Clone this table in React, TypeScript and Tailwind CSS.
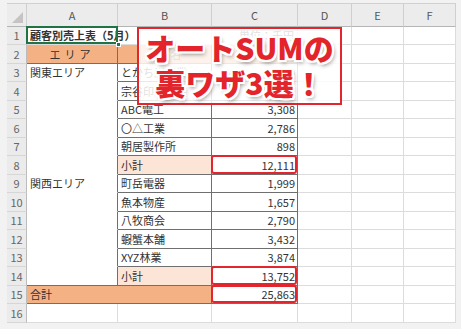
import type { ReactNode } from "react";

const FONT = "font-['Noto_Sans_CJK_JP',sans-serif]";

// light grid line / dark table line
const GRID = "border-r border-b border-[#dcdcdc]";

function Cell({ className = "", children }: { className?: string; children?: ReactNode }) {
  return (
    <div className={`relative flex items-center px-[3px] whitespace-nowrap text-[11px] text-[#333] ${className}`}>
      {children}
    </div>
  );
}

function RowHead({ n }: { n: number }) {
  return (
    <div className="flex items-center justify-center border-r border-b border-r-[#bcbcbc] border-b-[#d6d6d6] bg-[#ebebeb] text-[11px] text-[#666]">
      {n}
    </div>
  );
}

function RedBox() {
  return <div className="absolute -left-px -top-px right-0 bottom-0 rounded-[3px] border-2 border-[#e3262d]" />;
}

function Empty3() {
  return (
    <>
      <Cell className={GRID} />
      <Cell className={GRID} />
      <Cell className={GRID} />
    </>
  );
}

// table rows 3..14: [row, area, customer, sales, subtotal?]
const BODY: [number, string, string, string, boolean][] = [
  [3, "関東エリア", "とかち川産業", "2,059", false],
  [4, "", "宗谷印刷", "3,060", false],
  [5, "", "ABC電工", "3,308", false],
  [6, "", "〇△工業", "2,786", false],
  [7, "", "朝居製作所", "898", false],
  [8, "", "小計", "12,111", true],
  [9, "関西エリア", "町岳電器", "1,999", false],
  [10, "", "魚本物産", "1,657", false],
  [11, "", "八牧商会", "2,790", false],
  [12, "", "蝦蟹本舗", "3,432", false],
  [13, "", "XYZ林業", "3,874", false],
  [14, "", "小計", "13,752", true],
];

export default function App() {
  return (
    <div className={`relative h-[329px] w-[461px] overflow-hidden bg-[#f2f2f2] pl-[7px] pt-[3px] ${FONT}`}>
      <div className="grid w-[449px] grid-cols-[20px_91px_94px_86px_54px_52px_52px] grid-rows-[23px_18px_19px_18px_19px_18px_19px_18px_19px_18px_19px_18px_19px_18px_19px_18px_19px] border-t border-[#d0d0d0] bg-white">
        {/* column headers */}
        <div className="relative border-r border-b border-r-[#cfcfcf] border-b-[#b5b5b5] bg-[#ececec]">
          <svg className="absolute bottom-[3px] right-[3px]" width="11" height="11" viewBox="0 0 11 11">
            <polygon points="11,0 11,11 0,11" fill="#c4c4c4" />
          </svg>
        </div>
        {["A", "B", "C", "D", "E", "F"].map((l) => (
          <div
            key={l}
            className="flex items-center justify-center border-r border-b border-r-[#cfcfcf] border-b-[#b5b5b5] bg-[#ececec] text-[11px] text-[#555]"
          >
            {l}
          </div>
        ))}

        {/* row 1 */}
        <RowHead n={1} />
        <Cell className="z-10 border-b border-[#dcdcdc] font-bold text-[#222]">
          顧客別売上表（5月）
          <div className="absolute -left-px -top-px right-0 bottom-0 border-2 border-[#217346]" />
          <div className="absolute -bottom-[3px] right-[-3px] h-[5px] w-[5px] border border-white bg-[#217346]" />
        </Cell>
        <Cell className={GRID} />
        <Cell className={`${GRID} justify-end text-[10px]`}>単位：千円</Cell>
        <Empty3 />

        {/* row 2 */}
        <RowHead n={2} />
        <Cell className="justify-center border-r border-b border-[#6f6f6f] bg-[#f4b183] tracking-[4px]">エリア</Cell>
        <Cell className="justify-center border-r border-b border-[#6f6f6f] bg-[#f4b183]">顧客名</Cell>
        <Cell className="justify-center border-r border-b border-[#6f6f6f] bg-[#f4b183]">売上</Cell>
        <Empty3 />

        {BODY.map(([row, area, name, sales, sub]) => (
          <div key={row} className="contents">
            <RowHead n={row} />
            <Cell className={`border-r border-b border-r-[#6f6f6f] ${row === 14 ? "border-b-[#6f6f6f]" : "border-b-white"}`}>
              {area}
            </Cell>
            <Cell className={`border-r border-b border-[#6f6f6f] ${sub ? "bg-[#fce4d6]" : ""}`}>{name}</Cell>
            <Cell className="justify-end border-r border-b border-[#6f6f6f] pr-[2px]">
              {sales}
              {sub && <RedBox />}
            </Cell>
            <Empty3 />
          </div>
        ))}

        {/* row 15 */}
        <RowHead n={15} />
        <Cell className="col-span-2 border-r border-b border-[#6f6f6f] bg-[#f4b183]">合計</Cell>
        <Cell className="justify-end border-r border-b border-[#6f6f6f] pr-[2px]">
          25,863
          <RedBox />
        </Cell>
        <Empty3 />

        {/* row 16 */}
        <RowHead n={16} />
        <Cell className={GRID} />
        <Cell className={GRID} />
        <Cell className={GRID} />
        <Empty3 />
      </div>

      {/* title overlay */}
      <div className="absolute left-[137px] top-[27px] z-20 flex h-[78px] w-[205px] flex-col items-center justify-center border-2 border-[#e3262d] bg-white/85 pb-[3px]">
        <div className="text-[30px] font-black leading-[35px] text-[#e3242b] [text-shadow:2px_0_#fff,-2px_0_#fff,0_2px_#fff,0_-2px_#fff,2px_2px_#fff,-2px_-2px_#fff,2px_-2px_#fff,-2px_2px_#fff,2px_3px_4px_rgba(0,0,0,0.45)]">
          オートSUMの
        </div>
        <div className="text-[30px] font-black leading-[35px] text-[#e3242b] [text-shadow:2px_0_#fff,-2px_0_#fff,0_2px_#fff,0_-2px_#fff,2px_2px_#fff,-2px_-2px_#fff,2px_-2px_#fff,-2px_2px_#fff,2px_3px_4px_rgba(0,0,0,0.45)]">
          裏ワザ3選！
        </div>
      </div>
    </div>
  );
}
